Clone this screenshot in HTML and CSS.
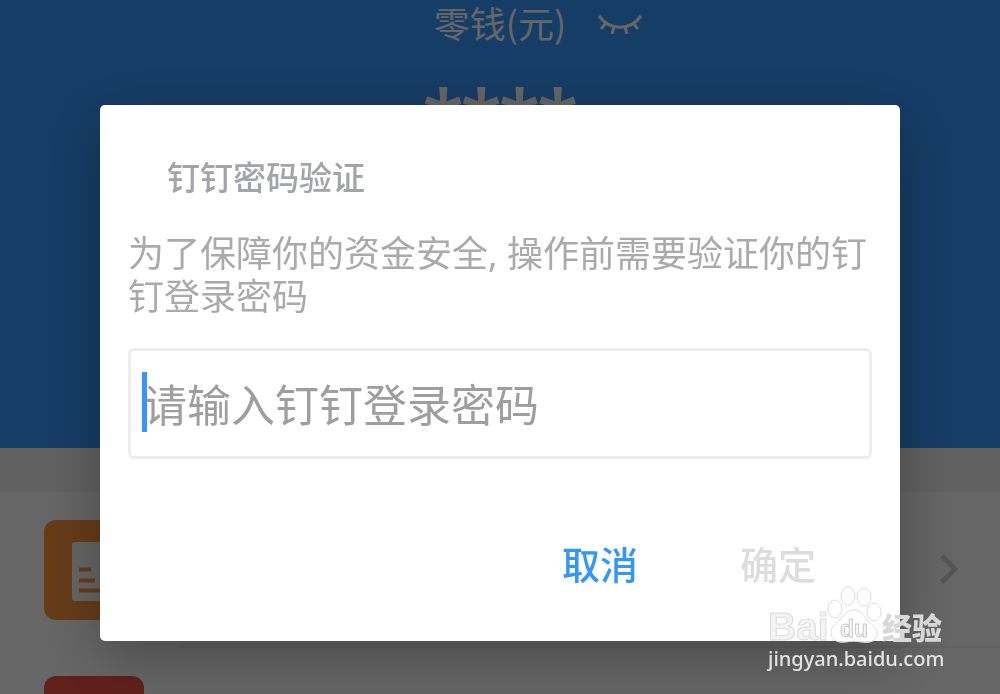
FILE: index.html
```html
<!DOCTYPE html>
<html lang="zh-CN">
<head>
<meta charset="utf-8">
<meta name="viewport" content="width=device-width, initial-scale=1">
<title>钉钉密码验证</title>
<link rel="stylesheet" href="styles.css">
</head>
<body>
<main class="wallet">
  <header class="balance">
    <div class="balance-label">
      <span>零钱(元)</span>
      <svg class="eye" viewBox="0 0 44 20" aria-hidden="true">
        <path d="M1 2C12 17 32 17 43 2M8 9L3 15M16 13L14 20M27 13L29 20M35 9L40 15"/>
      </svg>
    </div>
    <div class="balance-amount">****</div>
  </header>
  <ul class="menu">
    <li class="menu-item">
      <span class="tile tile-orange">
        <svg class="tile-icon" viewBox="0 0 100 100" aria-hidden="true">
          <rect x="28" y="22" width="46" height="59" rx="3" fill="#fff"/>
          <path d="M35 49.500h12M35 60.500h16M35 70.500h28" stroke="#ff963e" stroke-width="4"/>
        </svg>
      </span>
      <span class="menu-body">
        <svg class="chevron" viewBox="0 0 18 30" aria-hidden="true"><path d="M2 2L15 15L2 28"/></svg>
      </span>
    </li>
    <li class="menu-item">
      <span class="tile tile-red"></span>
      <span class="menu-body"></span>
    </li>
  </ul>
</main>

<div class="overlay">
  <form class="dialog" role="dialog" aria-labelledby="dialog-title">
    <h1 class="dialog-title" id="dialog-title">钉钉密码验证</h1>
    <label class="dialog-text" for="password">为了保障你的资金安全, 操作前需要验证你的钉钉登录密码</label>
    <div class="field">
      <input class="field-input" id="password" type="password" placeholder="请输入钉钉登录密码">
      <span class="field-caret"></span>
    </div>
    <div class="actions">
      <button class="action" type="button">取消</button>
      <button class="action action-disabled" type="submit" disabled>确定</button>
    </div>
  </form>
</div>

<div class="watermark">
  <div class="mark">
    <span class="mark-bai">Bai</span>
    <span class="mark-paw">
      <svg class="paw" viewBox="0 0 56 60" aria-hidden="true">
        <ellipse cx="9" cy="23" rx="7" ry="9"/>
        <ellipse cx="22" cy="10" rx="7" ry="9"/>
        <ellipse cx="38" cy="11" rx="7" ry="9"/>
        <ellipse cx="48" cy="26" rx="7" ry="9"/>
        <path d="M28 24C35 24 38 30 42 35C48 40 52 44 51 49C49 57 41 57 35 56C30 55 25 55 20 56C13 57 6 55 5 48C4 41 9 39 13 35C18 30 20 24 28 24Z"/>
      </svg>
      <span class="mark-du">du</span>
    </span>
    <span class="mark-name">经验</span>
  </div>
  <div class="mark-url">jingyan.baidu.com</div>
</div>
</body>
</html>
```
FILE: styles.css
```css
* {
  box-sizing: border-box;
}

body {
  margin: 0;
  font-family: "Noto Sans", "Noto Sans CJK SC", sans-serif;
  background: #fff;
}

.wallet {
  height: 100vh;
  overflow: hidden;
}

.balance {
  height: 448px;
  background: #3898ff;
  color: #fff;
  text-align: center;
}

.balance-label {
  display: flex;
  align-items: center;
  justify-content: center;
  gap: 32px;
  padding-left: 76px;
  font-size: 36px;
  line-height: 44px;
  font-family: "Noto Sans CJK SC", sans-serif;
}

.eye {
  width: 44px;
  height: 20px;
  margin-top: 4px;
  fill: none;
  stroke: #fff;
  stroke-width: 3;
}

.balance-amount {
  padding-top: 22px;
  font-family: Roboto, sans-serif;
  font-size: 84px;
  font-weight: 700;
  line-height: 104px;
}

.menu {
  margin: 0;
  padding: 0;
  list-style: none;
  border-top: 44px solid #f2f2f2;
}

.menu-item {
  display: flex;
  align-items: center;
  gap: 34px;
  height: 156px;
  margin-left: 44px;
}

.menu-body {
  display: flex;
  flex: 1;
  align-items: center;
  justify-content: flex-end;
  height: 100%;
  padding-right: 42px;
  border-bottom: 2px solid #f2f2f2;
}

.tile {
  width: 100px;
  height: 100px;
  border-radius: 12px;
}

.tile-orange {
  background: #ff963e;
}

.tile-red {
  background: #f05246;
}

.tile-icon {
  display: block;
  width: 100%;
}

.chevron {
  width: 18px;
  height: 30px;
  fill: none;
  stroke: #d2d2d2;
  stroke-width: 5;
}

.overlay {
  position: fixed;
  inset: 0;
  padding-top: 105px;
  background: rgba(0, 0, 0, 0.6);
}

.dialog {
  width: 80%;
  margin: 0 auto;
  padding: 48px 28px 50px;
  border-radius: 5px;
  background: #fff;
  box-shadow: 0 16px 60px rgba(0, 0, 0, 0.3);
}

.dialog-title {
  margin: 0 0 29px;
  padding-left: 39px;
  color: #a2a4a8;
  font-size: 33px;
  font-weight: 500;
  line-height: 50px;
}

.dialog-text {
  display: block;
  margin-bottom: 30px;
  color: #aaa;
  font-size: 36px;
  line-height: 43px;
}

.field {
  position: relative;
}

.field-input {
  display: block;
  width: 100%;
  height: 111px;
  padding: 0 12px 2px;
  border: 3px solid #eceded;
  border-radius: 6px;
  outline: 0;
  background: #fff;
  font-family: "Noto Sans CJK SC", sans-serif;
  font-size: 44px;
}

.field-input::placeholder {
  color: #9e9e9e;
  opacity: 1;
}

.field-caret {
  position: absolute;
  left: 14px;
  top: 24px;
  width: 5px;
  height: 60px;
  background: #3296fa;
}

.actions {
  display: flex;
  justify-content: flex-end;
  gap: 102px;
  margin-top: 76px;
  padding-right: 56px;
}

.action {
  padding: 0;
  border: 0;
  background: none;
  color: #3296fa;
  font-family: "Noto Sans CJK SC", sans-serif;
  font-size: 38px;
  font-weight: 500;
  line-height: 56px;
}

.action-disabled {
  color: #ddd;
}

.watermark {
  position: fixed;
  right: 52px;
  bottom: 22px;
  width: 180px;
  color: #e4e4e4;
}

.mark {
  display: flex;
  height: 60px;
}

.mark-bai {
  width: 58px;
  padding-top: 23px;
  font-family: "Liberation Sans", sans-serif;
  font-size: 39px;
  font-weight: 700;
  line-height: 36px;
  color: #f4f4f4;
  -webkit-text-stroke: 1px #dcdcdc;
}

.mark-paw {
  position: relative;
  width: 56px;
}

.paw {
  display: block;
  width: 56px;
  height: 60px;
  fill: rgba(255, 255, 255, 0.85);
  stroke: #dcdcdc;
  stroke-width: 1;
}

.mark-du {
  position: absolute;
  left: 0;
  top: 30px;
  width: 56px;
  text-align: center;
  font-family: "Liberation Sans", sans-serif;
  font-size: 23px;
  font-weight: 700;
  line-height: 26px;
  color: #f4f4f4;
  -webkit-text-stroke: 1px #ccc;
}

.mark-name {
  padding-top: 22px;
  font-size: 30px;
  font-weight: 900;
  line-height: 40px;
  color: #d8d8d8;
}

.mark-url {
  font-size: 20px;
  font-weight: 500;
  line-height: 26px;
}
```
